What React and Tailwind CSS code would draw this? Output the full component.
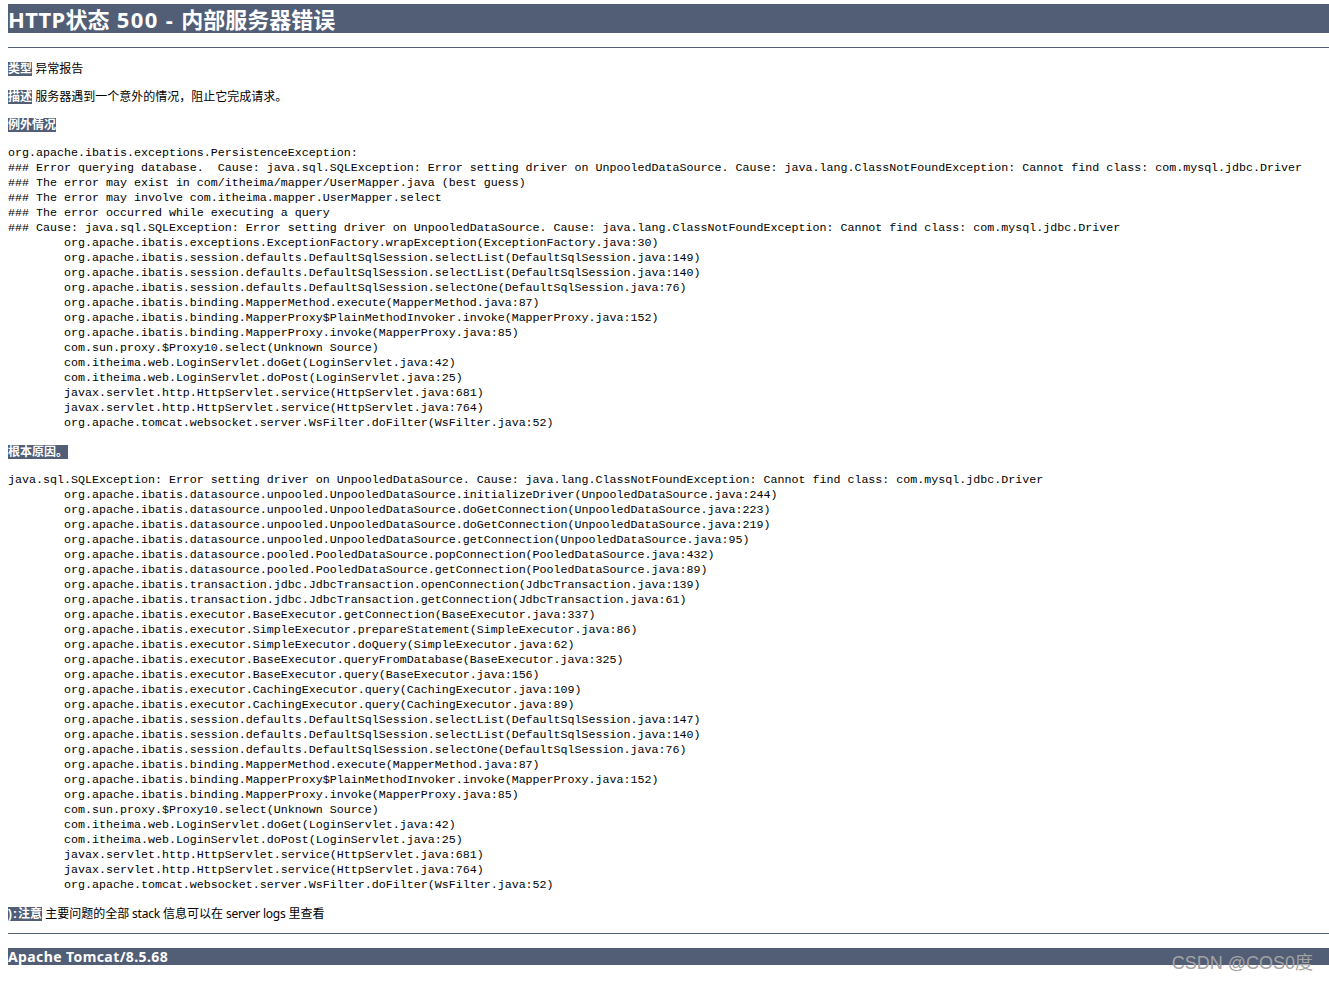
const first = `org.apache.ibatis.exceptions.PersistenceException: 
### Error querying database.  Cause: java.sql.SQLException: Error setting driver on UnpooledDataSource. Cause: java.lang.ClassNotFoundException: Cannot find class: com.mysql.jdbc.Driver
### The error may exist in com/itheima/mapper/UserMapper.java (best guess)
### The error may involve com.itheima.mapper.UserMapper.select
### The error occurred while executing a query
### Cause: java.sql.SQLException: Error setting driver on UnpooledDataSource. Cause: java.lang.ClassNotFoundException: Cannot find class: com.mysql.jdbc.Driver
        org.apache.ibatis.exceptions.ExceptionFactory.wrapException(ExceptionFactory.java:30)
        org.apache.ibatis.session.defaults.DefaultSqlSession.selectList(DefaultSqlSession.java:149)
        org.apache.ibatis.session.defaults.DefaultSqlSession.selectList(DefaultSqlSession.java:140)
        org.apache.ibatis.session.defaults.DefaultSqlSession.selectOne(DefaultSqlSession.java:76)
        org.apache.ibatis.binding.MapperMethod.execute(MapperMethod.java:87)
        org.apache.ibatis.binding.MapperProxy$PlainMethodInvoker.invoke(MapperProxy.java:152)
        org.apache.ibatis.binding.MapperProxy.invoke(MapperProxy.java:85)
        com.sun.proxy.$Proxy10.select(Unknown Source)
        com.itheima.web.LoginServlet.doGet(LoginServlet.java:42)
        com.itheima.web.LoginServlet.doPost(LoginServlet.java:25)
        javax.servlet.http.HttpServlet.service(HttpServlet.java:681)
        javax.servlet.http.HttpServlet.service(HttpServlet.java:764)
        org.apache.tomcat.websocket.server.WsFilter.doFilter(WsFilter.java:52)`;

const second = `java.sql.SQLException: Error setting driver on UnpooledDataSource. Cause: java.lang.ClassNotFoundException: Cannot find class: com.mysql.jdbc.Driver
        org.apache.ibatis.datasource.unpooled.UnpooledDataSource.initializeDriver(UnpooledDataSource.java:244)
        org.apache.ibatis.datasource.unpooled.UnpooledDataSource.doGetConnection(UnpooledDataSource.java:223)
        org.apache.ibatis.datasource.unpooled.UnpooledDataSource.doGetConnection(UnpooledDataSource.java:219)
        org.apache.ibatis.datasource.unpooled.UnpooledDataSource.getConnection(UnpooledDataSource.java:95)
        org.apache.ibatis.datasource.pooled.PooledDataSource.popConnection(PooledDataSource.java:432)
        org.apache.ibatis.datasource.pooled.PooledDataSource.getConnection(PooledDataSource.java:89)
        org.apache.ibatis.transaction.jdbc.JdbcTransaction.openConnection(JdbcTransaction.java:139)
        org.apache.ibatis.transaction.jdbc.JdbcTransaction.getConnection(JdbcTransaction.java:61)
        org.apache.ibatis.executor.BaseExecutor.getConnection(BaseExecutor.java:337)
        org.apache.ibatis.executor.SimpleExecutor.prepareStatement(SimpleExecutor.java:86)
        org.apache.ibatis.executor.SimpleExecutor.doQuery(SimpleExecutor.java:62)
        org.apache.ibatis.executor.BaseExecutor.queryFromDatabase(BaseExecutor.java:325)
        org.apache.ibatis.executor.BaseExecutor.query(BaseExecutor.java:156)
        org.apache.ibatis.executor.CachingExecutor.query(CachingExecutor.java:109)
        org.apache.ibatis.executor.CachingExecutor.query(CachingExecutor.java:89)
        org.apache.ibatis.session.defaults.DefaultSqlSession.selectList(DefaultSqlSession.java:147)
        org.apache.ibatis.session.defaults.DefaultSqlSession.selectList(DefaultSqlSession.java:140)
        org.apache.ibatis.session.defaults.DefaultSqlSession.selectOne(DefaultSqlSession.java:76)
        org.apache.ibatis.binding.MapperMethod.execute(MapperMethod.java:87)
        org.apache.ibatis.binding.MapperProxy$PlainMethodInvoker.invoke(MapperProxy.java:152)
        org.apache.ibatis.binding.MapperProxy.invoke(MapperProxy.java:85)
        com.sun.proxy.$Proxy10.select(Unknown Source)
        com.itheima.web.LoginServlet.doGet(LoginServlet.java:42)
        com.itheima.web.LoginServlet.doPost(LoginServlet.java:25)
        javax.servlet.http.HttpServlet.service(HttpServlet.java:681)
        javax.servlet.http.HttpServlet.service(HttpServlet.java:764)
        org.apache.tomcat.websocket.server.WsFilter.doFilter(WsFilter.java:52)`;

const Label = ({ children }) => (
  <b className="bg-[#525D76] font-bold text-white [font-family:'Liberation_Sans','Noto_Sans_CJK_SC',sans-serif]">{children}</b>
);

const Para = ({ children, className = "" }) => (
  <p className={`h-[14px] text-[12px] leading-[14px] whitespace-pre text-black ${className}`}>{children}</p>
);

const Pre = ({ children, className = "" }) => (
  <pre className={`text-[11.67px] leading-[15px] text-black [font-family:'Liberation_Mono',monospace] ${className}`}>{children}</pre>
);

export default function App() {
  return (
    <div className="relative h-[982px] overflow-hidden bg-white pt-1 pl-2 [font-family:'Noto_Sans','Noto_Sans_CJK_SC',sans-serif]">
      <h1 className="h-[29px] bg-[#525D76] text-[22px] leading-[30px] font-bold whitespace-pre text-white">
        <span className="tracking-[0.3px]">HTTP</span>状态<span className="tracking-[1.4px]"> 500 - </span>内部服务器错误
      </h1>
      <hr className="mt-[14px] h-px border-0 bg-[#525D76]" />
      <Para className="mt-[14px]"><Label>类型</Label> 异常报告</Para>
      <Para className="mt-[14px]"><Label>描述</Label> 服务器遇到一个意外的情况，阻止它完成请求。</Para>
      <Para className="mt-[14px]"><Label>例外情况</Label></Para>
      <Pre className="mt-[14px]">{first}</Pre>
      <Para className="mt-[14px]"><Label>根本原因。</Label></Para>
      <Pre className="mt-[14px]">{second}</Pre>
      <Para className="mt-[14px]">
        <Label><span className="tracking-[1px]">):</span>注意</Label>
        {" 主要问题的全部"}<span className="tracking-[-0.2px]"> stack </span>{"信息可以在"}<span className="tracking-[-0.2px]"> server logs </span>{"里查看"}
      </Para>
      <hr className="mt-[12px] h-px border-0 bg-[#525D76]" />
      <h3 className="mt-[14px] h-[17px] bg-[#525D76] text-[14px] leading-[17px] font-bold tracking-[0.4px] text-white">Apache Tomcat/8.5.68</h3>
      <div className="absolute top-[951px] right-[16px] text-[18px] leading-[24px] text-[#a3a3a3] [font-family:'Liberation_Sans','Noto_Sans_CJK_SC',sans-serif]">CSDN @COS0度</div>
    </div>
  );
}
